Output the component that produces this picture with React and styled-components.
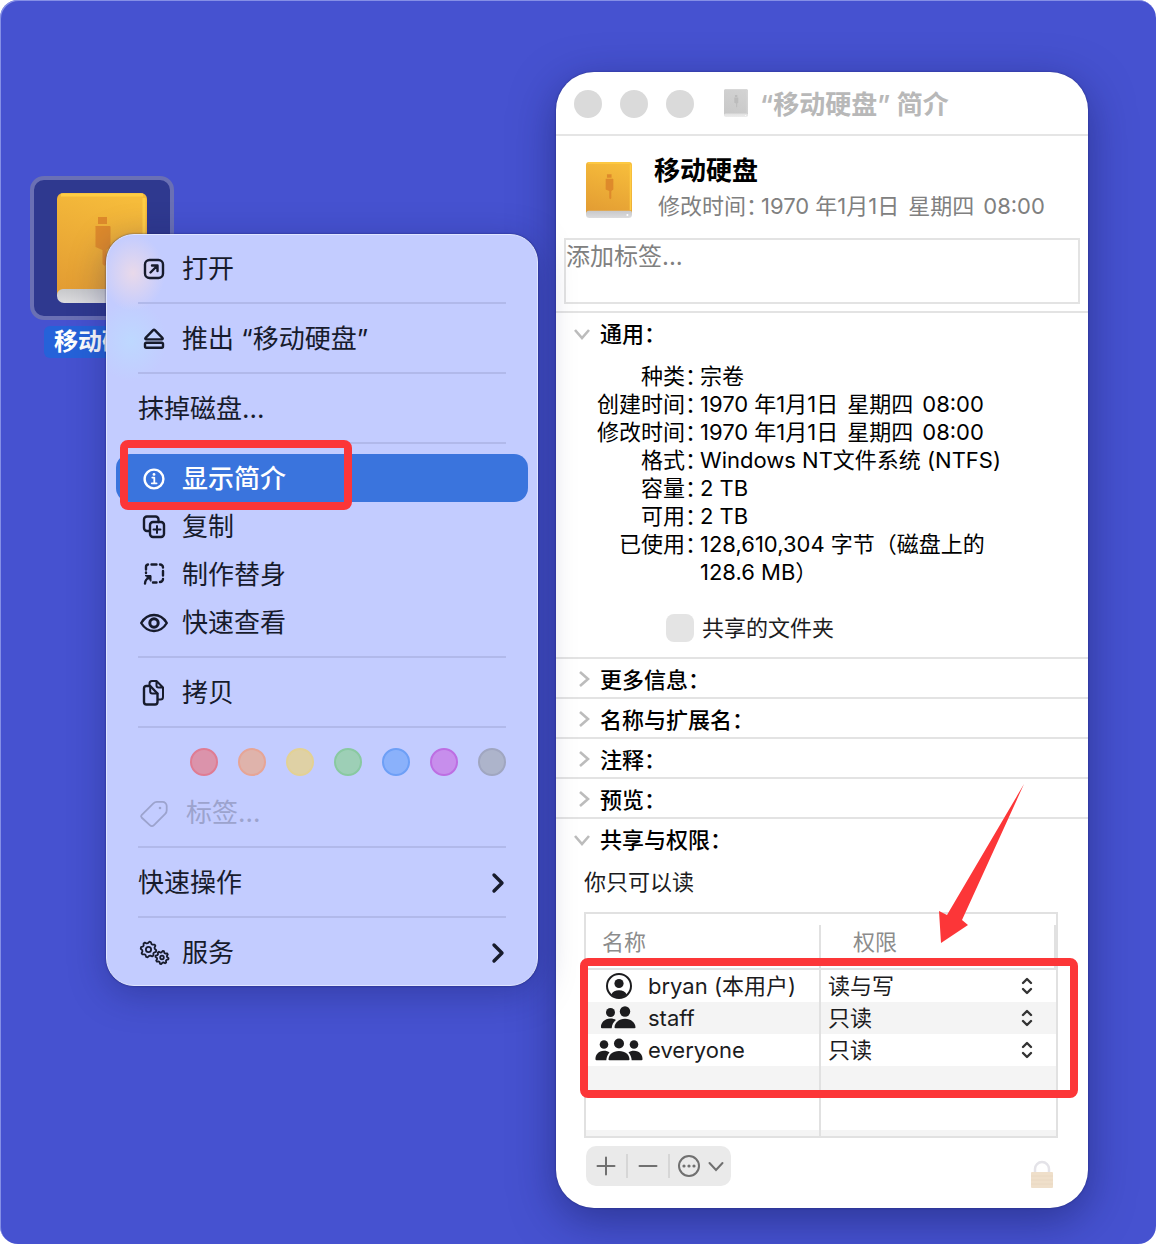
import { useId, useState } from "react";
import styled, { createGlobalStyle, css } from "styled-components";

const DATE = ["1970 年1月1日", "星期四", "08:00"];

const GENERAL = [
  ["种类：", "宗卷"],
  ["创建时间：", DATE],
  ["修改时间：", DATE],
  ["格式：", "Windows NT文件系统 (NTFS)"],
  ["容量：", "2 TB"],
  ["可用：", "2 TB"],
  ["已使用：", "128,610,304 字节（磁盘上的 128.6 MB）"],
];

const CLOSED_SECTIONS = ["更多信息：", "名称与扩展名：", "注释：", "预览："];

const USERS = [
  { name: "bryan (本用户)", icon: "person", access: "读与写" },
  { name: "staff", icon: "pair", access: "只读" },
  { name: "everyone", icon: "group", access: "只读" },
];

const TAGS = [
  { name: "红色", fill: "#db93ab", ring: "#df7c93" },
  { name: "橙色", fill: "#dfb3ab", ring: "#e6a596" },
  { name: "黄色", fill: "#dfd1a5", ring: "#e3d194" },
  { name: "绿色", fill: "#9dcfb6", ring: "#89c9a1" },
  { name: "蓝色", fill: "#8ab1fb", ring: "#6d9ff6" },
  { name: "紫色", fill: "#c78eec", ring: "#bd6ee2" },
  { name: "灰色", fill: "#adb4cb", ring: "#a0a6c0" },
];

function gear(cx, cy, r) {
  const points = [];
  for (let i = 0; i < 32; i++) {
    const angle = (i / 32) * Math.PI * 2 + 0.1;
    const radius = i % 4 < 2 ? r : r - 1.5;
    points.push(
      `${(cx + Math.cos(angle) * radius).toFixed(2)} ${(cy + Math.sin(angle) * radius).toFixed(2)}`
    );
  }
  return `M${points.join("L")}Z`;
}

const menuIcons = {
  open: (
    <>
      <rect x="7" y="7" width="18" height="18" rx="4.5" />
      <path d="M12.5 19.5l7-7M14 12.5h5.5V18" />
    </>
  ),
  eject: (
    <>
      <path d="M14.9 7.4L7.6 14.8c-.7.7-.3 1.6.7 1.6h15.4c1 0 1.4-.9.7-1.6l-7.3-7.4c-.7-.7-1.5-.7-2.2 0z" />
      <rect x="7" y="19.7" width="18" height="5" rx="1.4" />
    </>
  ),
  info: (
    <>
      <circle cx="16" cy="16" r="9.4" />
      <path d="M14.3 14.6h2v5.6M13.8 20.3h4.8" strokeWidth="1.8" />
      <circle cx="16" cy="11.4" r="1.4" fill="currentColor" stroke="none" />
    </>
  ),
  duplicate: (
    <>
      <path d="M11.5 20H9a3 3 0 0 1-3-3V8.5a3 3 0 0 1 3-3h8.5a3 3 0 0 1 3 3V11" />
      <rect x="12" y="11" width="14" height="15" rx="3" />
      <path d="M19 15v7M15.500 18.500h7" strokeWidth="2" />
    </>
  ),
  alias: (
    <>
      <path d="M8 10.500V8a2.500 2.500 0 0 1 2-2.500M13.500 5.500h5M22 5.500a3 3 0 0 1 3 3M25 12v4.500M25 20a3 3 0 0 1-3 3M18.500 23.500H15M8 13.500v.5" />
      <path d="M7 24.500c0-3 1.500-5 5-6.500" />
      <path d="M7.500 16.500h5.500v5.500z" fill="currentColor" strokeWidth="1" />
    </>
  ),
  eye: (
    <>
      <path d="M3.200 16c3-5 7.500-8 12.800-8s9.800 3 12.800 8c-3 5-7.500 8-12.800 8s-9.800-3-12.800-8z" />
      <circle cx="16" cy="16" r="4.200" strokeWidth="3" />
    </>
  ),
  copy: (
    <>
      <path d="M8.200 9h4l7.300 7.500V25a2.500 2.500 0 0 1-2.500 2.500H8.500A2.500 2.500 0 0 1 6 25V11.200A2.200 2.200 0 0 1 8.200 9z" />
      <path
        d="M12.200 9v5.500a2 2 0 0 0 2 2h5.300M11.500 8.500V6.500a2.500 2.500 0 0 1 2.500-2.500h4.500l6.500 6.500V20a2.500 2.500 0 0 1-2.500 2.500H20M18.500 4v4.500a2 2 0 0 0 2 2H25"
        strokeWidth="2"
      />
    </>
  ),
  tag: (
    <>
      <path
        d="M3.600 18.200L15.400 6.300A5 5 0 0 1 19 4.800h5.500A4.200 4.200 0 0 1 28.700 9v4.200a5 5 0 0 1-1.500 3.600L16 28.100a3 3 0 0 1-4.200 0l-8.200-7.600a1.700 1.700 0 0 1 0-2.300z"
        strokeWidth="1.8"
      />
      <circle cx="22" cy="11" r="1.3" fill="currentColor" stroke="none" />
    </>
  ),
  gears: (
    <g strokeWidth="1.8">
      <path d={gear(10.5, 12.5, 7.8)} />
      <circle cx="10.5" cy="12.5" r="2.6" />
      <path d={gear(24, 20.5, 6.6)} />
      <circle cx="24" cy="20.5" r="1.8" />
    </g>
  ),
};

const userIcons = {
  person: (
    <>
      <circle cx="25" cy="16" r="12" fill="none" stroke="currentColor" strokeWidth="2" />
      <circle cx="25" cy="13.5" r="4.6" />
      <path d="M17.300 24.600c1.500-3 4-4.300 7.700-4.300s6.200 1.300 7.700 4.300c-2 2-4.600 3-7.700 3s-5.700-1-7.700-3z" />
    </>
  ),
  pair: (
    <>
      <circle cx="16.5" cy="10.5" r="4.5" />
      <circle cx="31" cy="9.5" r="5.2" />
      <path d="M7 25.500c-.5-4.500 3.500-9 9.500-9 2.200 0 4 .5 5.400 1.500-2.500 2-4 4.700-4.200 8.300H8c-.6 0-1-.3-1-.8z" />
      <path d="M20.500 25.500c0-4.700 4.300-8.800 10.500-8.800s10.500 4.100 10.500 8.800c0 .5-.4.800-1 .8h-19c-.6 0-1-.3-1-.8z" />
    </>
  ),
  group: (
    <>
      <circle cx="10" cy="10.5" r="4.3" />
      <circle cx="25" cy="9.5" r="5" />
      <circle cx="40" cy="10.5" r="4.3" />
      <path d="M1.500 25.500c-.4-4.500 3-8.800 8.500-8.800 2.300 0 4.200.6 5.500 1.800-1.800 2-3 4.500-3.200 7.800H2.500c-.6 0-1-.3-1-.8z" />
      <path d="M48.500 25.500c.4-4.500-3-8.800-8.500-8.800-2.300 0-4.200.6-5.500 1.800 1.800 2 3 4.500 3.200 7.800h9.800c.6 0 1-.3 1-.8z" />
      <path d="M14.500 25.500c0-4.700 4-8.600 10.500-8.600s10.500 3.900 10.500 8.600c0 .5-.4.800-1 .8h-19c-.6 0-1-.3-1-.8z" />
    </>
  ),
};

function DriveIcon({ grey, ...props }) {
  const id = useId();
  return (
    <svg viewBox="0 0 90 110" preserveAspectRatio="none" aria-hidden="true" {...props}>
      <defs>
        <linearGradient id={`${id}b`} x1="0.6" y1="0" x2="0.3" y2="1">
          <stop offset="0" stopColor={grey ? "#d2d2d2" : "#f6bc3b"} />
          <stop offset="1" stopColor={grey ? "#c8c8c8" : "#e39d33"} />
        </linearGradient>
        <linearGradient id={`${id}s`} x1="0" y1="0" x2="0" y2="1">
          <stop offset="0" stopColor={grey ? "#d8d8d8" : "#b9babd"} />
          <stop offset="1" stopColor={grey ? "#ececec" : "#dcdcde"} />
        </linearGradient>
      </defs>
      <rect x="0" y="86" width="90" height="24" rx="7" fill={`url(#${id}s)`} />
      <path
        d="M6 0h78a6 6 0 0 1 6 6v94a4 4 0 0 0-4-4H6a6 6 0 0 0-6 6V6a6 6 0 0 1 6-6z"
        fill={`url(#${id}b)`}
      />
      <path
        d="M87 5v90M4 2h82"
        fill="none"
        stroke={grey ? "#dadada" : "#ffcd45"}
        strokeWidth="3"
      />
      <path
        d="M41 24h9v7h-9zM38.500 33h14a1 1 0 0 1 1 1v20l-4 3v14l-2 2-2-2V57l-7-3V34a1 1 0 0 1 0-1z"
        fill={grey ? "#bcbcbc" : "#de8a2b"}
      />
      <circle cx="81" cy="104" r="2" fill="#fff" />
    </svg>
  );
}

function DateText({ parts }) {
  return (
    <DateParts>
      {parts.map((part) => (
        <span key={part}>{part}</span>
      ))}
    </DateParts>
  );
}

function MenuItem({ icon, active, disabled, submenu, children }) {
  return (
    <Item type="button" role="menuitem" $active={active} disabled={disabled}>
      {icon && (
        <MenuIcon viewBox="0 0 32 32" aria-hidden="true">
          {menuIcons[icon]}
        </MenuIcon>
      )}
      <span>{children}</span>
      {submenu && (
        <SubmenuArrow viewBox="0 0 16 24" aria-hidden="true">
          <path d="M4 4l8 8-8 8" />
        </SubmenuArrow>
      )}
      {active && <ItemFrame />}
    </Item>
  );
}

function ContextMenu() {
  return (
    <Menu role="menu" aria-label="移动硬盘">
      <MenuItem icon="open">打开</MenuItem>
      <Separator />
      <MenuItem icon="eject">推出 “移动硬盘”</MenuItem>
      <Separator />
      <MenuItem>抹掉磁盘...</MenuItem>
      <Separator />
      <MenuItem icon="info" active>
        显示简介
      </MenuItem>
      <MenuItem icon="duplicate">复制</MenuItem>
      <MenuItem icon="alias">制作替身</MenuItem>
      <MenuItem icon="eye">快速查看</MenuItem>
      <Separator />
      <MenuItem icon="copy">拷贝</MenuItem>
      <Separator />
      <TagRow>
        {TAGS.map((tag) => (
          <TagDot
            key={tag.name}
            type="button"
            aria-label={tag.name}
            $fill={tag.fill}
            $ring={tag.ring}
          />
        ))}
      </TagRow>
      <MenuItem icon="tag" disabled>
        标签...
      </MenuItem>
      <Separator />
      <MenuItem submenu>快速操作</MenuItem>
      <Separator />
      <MenuItem icon="gears" submenu>
        服务
      </MenuItem>
    </Menu>
  );
}

function SectionHeader({ open, children }) {
  return (
    <SectionButton type="button" aria-expanded={!!open}>
      <Disclosure viewBox="0 0 20 20" aria-hidden="true">
        <path d={open ? "M3 6l7 8 7-8" : "M8 2l8 7-8 7"} />
      </Disclosure>
      {children}
    </SectionButton>
  );
}

function PermissionRow({ user }) {
  const [access, setAccess] = useState(user.access);
  return (
    <tr>
      <NameCell>
        <UserName>
          <UserIcon viewBox="0 0 50 32" aria-hidden="true">
            {userIcons[user.icon]}
          </UserIcon>
          {user.name}
        </UserName>
      </NameCell>
      <Cell>
        <SelectWrap>
          <Select
            aria-label={`${user.name} 权限`}
            value={access}
            onChange={(e) => setAccess(e.target.value)}
          >
            <option>读与写</option>
            <option>只读</option>
          </Select>
          <Stepper viewBox="0 0 12 18" aria-hidden="true">
            <path d="M2 6l4-4 4 4M2 12l4 4 4-4" />
          </Stepper>
        </SelectWrap>
      </Cell>
    </tr>
  );
}

function InfoWindow() {
  const [shared, setShared] = useState(false);
  return (
    <Window>
      <TitleBar>
        <Light type="button" aria-label="关闭" />
        <Light type="button" aria-label="最小化" />
        <Light type="button" aria-label="缩放" />
        <TitleIcon grey />
        <Title>“移动硬盘” 简介</Title>
      </TitleBar>
      <Summary>
        <SummaryIcon />
        <div>
          <Name>移动硬盘</Name>
          <Modified>
            <Label>修改时间：</Label>
            <DateText parts={DATE} />
          </Modified>
        </div>
      </Summary>
      <TagInput aria-label="标签" placeholder="添加标签..." />

      <Section>
        <SectionHeader open>通用：</SectionHeader>
        <Facts>
          {GENERAL.map(([label, value]) => (
            <Fact key={label}>
              <Label as="dt">{label}</Label>
              <dd>{Array.isArray(value) ? <DateText parts={value} /> : value}</dd>
            </Fact>
          ))}
        </Facts>
        <SharedLabel>
          <Checkbox
            type="checkbox"
            checked={shared}
            onChange={(e) => setShared(e.target.checked)}
          />
          共享的文件夹
        </SharedLabel>
      </Section>
      {CLOSED_SECTIONS.map((title) => (
        <Section key={title}>
          <SectionHeader>{title}</SectionHeader>
        </Section>
      ))}
      <Section>
        <SectionHeader open>共享与权限：</SectionHeader>
        <Sharing>
          <Note>你只可以读</Note>
          <TableWrap>
            <Table>
              <thead>
                <tr>
                  <HeadCell>名称</HeadCell>
                  <HeadCell $wide>权限</HeadCell>
                </tr>
              </thead>
              <tbody>
                {USERS.map((user) => (
                  <PermissionRow key={user.name} user={user} />
                ))}
                <tr>
                  <NameCell />
                  <Cell />
                </tr>
                <tr>
                  <NameCell />
                  <Cell />
                </tr>
                <tr>
                  <NameCell $short />
                  <Cell $short />
                </tr>
              </tbody>
            </Table>
            <TableFrame />
            <Arrow viewBox="0 0 90 166" aria-hidden="true">
              <path d="M88 3L26 139l6 5-27 18-2-32 8 4z" />
            </Arrow>
          </TableWrap>
          <Footer>
            <Toolbar>
              <ToolButton type="button" aria-label="添加">
                <ToolIcon viewBox="0 0 24 24" $width={24}>
                  <path d="M12 3.500v17M3.500 12h17" />
                </ToolIcon>
              </ToolButton>
              <Divider />
              <ToolButton type="button" aria-label="移除">
                <ToolIcon viewBox="0 0 24 24" $width={24}>
                  <path d="M3.500 12h17" />
                </ToolIcon>
              </ToolButton>
              <Divider />
              <ToolButton type="button" aria-label="更多操作" $wide>
                <ToolIcon viewBox="0 0 50 24" $width={50}>
                  <circle cx="13" cy="12" r="10" />
                  <path d="M33.500 9l6.500 7 6.500-7" />
                  <g fill="currentColor" stroke="none">
                    <circle cx="8" cy="12" r="1.6" />
                    <circle cx="13" cy="12" r="1.6" />
                    <circle cx="18" cy="12" r="1.6" />
                  </g>
                </ToolIcon>
              </ToolButton>
            </Toolbar>
            <LockButton type="button" aria-label="解锁">
              <svg width="24" height="30" viewBox="0 0 24 30">
                <path d="M5 14V9a7 7 0 0 1 14 0v5" fill="none" stroke="#e4e3e8" strokeWidth="2.5" />
                <rect x="1" y="12" width="22" height="16" rx="1" fill="#efdfca" />
                <path d="M1 16h22M1 20h22M1 24h22" stroke="#e9d8c2" />
              </svg>
            </LockButton>
          </Footer>
        </Sharing>
      </Section>
    </Window>
  );
}

export default function App() {
  return (
    <>
      <GlobalStyle />
      <Desktop>
        <DesktopItem>
          <IconFrame>
            <DesktopIcon />
          </IconFrame>
          <IconName>移动硬盘</IconName>
          <ContextMenu />
        </DesktopItem>
        <InfoWindow />
      </Desktop>
    </>
  );
}

//Styles
const GlobalStyle = createGlobalStyle`
  *, *::before, *::after {
    box-sizing: border-box;
  }

  body {
    margin: 0;
    background: #fff;
    color: #1c1c1e;
    font-family: Inter, "Noto Sans CJK SC", sans-serif;
    font-size: 22px;
    line-height: 28px;
  }

  button, input, select, textarea {
    margin: 0;
    padding: 0;
    border: 0;
    background: none;
    color: inherit;
    font: inherit;
  }

  svg {
    display: block;
    flex-shrink: 0;
  }
`;

const Desktop = styled.main`
  display: flex;
  align-items: flex-start;
  justify-content: space-between;
  min-height: 100vh;
  padding: 72px 68px 36px 30px;
  border-radius: 18px;
  background: #4652d0;
  box-shadow: inset 1px 1px 0 rgba(160, 170, 240, 0.7);
`;

const DesktopItem = styled.div`
  position: relative;
  display: flex;
  flex-direction: column;
  align-items: center;
  gap: 6px;
  margin-top: 104px;
`;

const IconFrame = styled.div`
  display: grid;
  place-items: center;
  width: 144px;
  height: 144px;
  border: 4px solid #6a70b4;
  border-radius: 14px;
  background: #2f398f;
`;

const DesktopIcon = styled(DriveIcon)`
  width: 90px;
  height: 110px;
`;

const IconName = styled.span`
  padding: 0 10px;
  border-radius: 6px;
  background: #2562d9;
  color: #fff;
  font-size: 24px;
  font-weight: 600;
  line-height: 32px;
`;

const Menu = styled.div`
  position: absolute;
  top: 58px;
  left: 76px;
  display: flex;
  flex-direction: column;
  width: 432px;
  padding: 9px;
  border: 1px solid #dfe5ff;
  border-radius: 28px;
  background: radial-gradient(ellipse 32px 38px at 26px 38px, #e9d9ea, rgba(233, 217, 234, 0)),
    radial-gradient(ellipse 36px 40px at 24px 106px, #bed8ff, rgba(190, 216, 255, 0)), #c3ccff;
  box-shadow: 0 0 2px rgba(20, 25, 90, 0.7), 0 8px 36px rgba(20, 25, 90, 0.35);
`;

const Item = styled.button`
  position: relative;
  display: flex;
  align-items: center;
  gap: 12px;
  height: 48px;
  padding: 2px 22px 0;
  border-radius: 14px;
  color: #171b2c;
  font-size: 26px;
  line-height: 36px;
  text-align: left;

  ${({ $active }) =>
    $active &&
    css`
      background: #3a74dd;
      color: #fff;
      font-weight: 500;
    `}

  &:disabled {
    gap: 16px;
    color: #9ca3cd;
  }
`;

const ItemFrame = styled.span`
  position: absolute;
  top: -14px;
  left: 4px;
  width: 232px;
  height: 70px;
  border: 8px solid #fc3638;
  border-radius: 8px;
  pointer-events: none;
`;

const MenuIcon = styled.svg`
  width: 32px;
  height: 32px;
  fill: none;
  stroke: currentColor;
  stroke-width: 2.4;
  stroke-linecap: round;
  stroke-linejoin: round;
`;

const SubmenuArrow = styled.svg`
  width: 16px;
  height: 24px;
  margin-left: auto;
  fill: none;
  stroke: currentColor;
  stroke-width: 3.4;
  stroke-linecap: round;
  stroke-linejoin: round;
`;

const Separator = styled.hr`
  width: auto;
  height: 2px;
  margin: 10px 22px;
  border: 0;
  background: #b1b9ea;
`;

const TagRow = styled.div`
  display: flex;
  align-items: center;
  justify-content: space-between;
  height: 50px;
  padding: 0 22px 2px 74px;
`;

const TagDot = styled.button`
  width: 28px;
  height: 28px;
  border: 2px solid ${({ $ring }) => $ring};
  border-radius: 50%;
  background: ${({ $fill }) => $fill};
`;

const Window = styled.section`
  flex: 0 1 532px;
  min-width: 0;
  overflow: hidden;
  border-radius: 38px;
  background: #fff;
  box-shadow: 0 0 2px rgba(20, 25, 90, 0.6), 0 12px 44px rgba(20, 25, 90, 0.5);
`;

const TitleBar = styled.header`
  display: flex;
  align-items: center;
  gap: 18px;
  height: 64px;
  padding: 2px 18px 0;
  border-bottom: 2px solid #e5e5e5;
`;

const Light = styled.button`
  width: 28px;
  height: 28px;
  border-radius: 50%;
  background: #dadada;
`;

const TitleIcon = styled(DriveIcon)`
  width: 24px;
  height: 28px;
  margin: 0 -6px 2px 12px;
`;

const Title = styled.h1`
  margin: 0;
  padding-top: 2px;
  color: #b8b8b8;
  font-size: 26px;
  font-weight: 600;
  line-height: 36px;
`;

const Summary = styled.div`
  display: flex;
  align-items: center;
  gap: 22px;
  padding: 17px 30px 15px;
`;

const SummaryIcon = styled(DriveIcon)`
  width: 46px;
  height: 56px;
  margin-top: 4px;
`;

const Name = styled.h2`
  margin: 0;
  color: #000;
  font-size: 26px;
  font-weight: 700;
  line-height: 36px;
`;

const Modified = styled.p`
  display: flex;
  margin: 0 0 0 4px;
  color: #808080;
  line-height: 34px;
`;

// half-width form of the colon, so the value follows it closely
const Label = styled.span`
  padding-right: 4px;
  font-feature-settings: "halt";
  text-align: right;
`;

const DateParts = styled.span`
  display: inline-flex;
  gap: 9px;
`;

const TagInput = styled.textarea`
  display: block;
  width: calc(100% - 16px);
  height: 66px;
  margin: 0 8px 7px;
  border: 2px solid #e3e3e3;
  font-size: 24px;
  line-height: 34px;
  resize: none;

  &::placeholder {
    color: #808080;
    opacity: 1;
  }
`;

const Section = styled.section`
  border-top: 2px solid #e3e3e3;
`;

const SectionButton = styled.button`
  display: flex;
  align-items: center;
  gap: 8px;
  width: 100%;
  height: 38px;
  padding: 4px 16px 0;
  color: #000;
  font-weight: 500;
  text-align: left;
`;

const Disclosure = styled.svg`
  width: 20px;
  height: 20px;
  fill: none;
  stroke: #bcbcbc;
  stroke-width: 2.6;
`;

const Facts = styled.dl`
  margin: 11px 68px 28px 0;
  color: #000;
`;

const Fact = styled.div`
  display: grid;
  grid-template-columns: 144px 1fr;

  dd {
    margin: 0;
  }
`;

const SharedLabel = styled.label`
  display: flex;
  align-items: center;
  gap: 8px;
  width: fit-content;
  margin: 0 0 15px 110px;
`;

const Checkbox = styled.input`
  width: 28px;
  height: 28px;
  appearance: none;
  border-radius: 8px;
  background: #e4e4e4;

  &:checked {
    background: #3a74dd;
  }
`;

const Sharing = styled.div`
  padding: 11px 30px 22px 28px;
`;

const Note = styled.p`
  margin: 0 0 16px;
`;

const TableWrap = styled.div`
  position: relative;
  border: 2px solid #e1e1e1;
`;

const Table = styled.table`
  width: 100%;
  border-collapse: separate;
  border-spacing: 0;
  table-layout: fixed;

  tbody tr:nth-child(even) {
    background: #f4f4f4;
  }
`;

const HeadCell = styled.th`
  height: 56px;
  padding: 2px 0 0 ${({ $wide }) => ($wide ? 32 : 16)}px;
  border-bottom: 2px solid #e1e1e1;
  background: linear-gradient(#e1e1e1, #e1e1e1) right bottom / 2px 43px no-repeat;
  color: #8c8c8c;
  font-weight: 400;
  text-align: left;
`;

const Cell = styled.td`
  height: ${({ $short }) => ($short ? 6 : 32)}px;
  padding: 0 23px 0 7px;
`;

const NameCell = styled(Cell)`
  padding: 0 0 0 8px;
  border-right: 2px solid #e1e1e1;
`;

const UserName = styled.div`
  display: flex;
  align-items: center;
  gap: 4px;
  white-space: nowrap;
`;

const UserIcon = styled.svg`
  width: 50px;
  height: 32px;
  fill: currentColor;
`;

const SelectWrap = styled.div`
  display: flex;
  align-items: center;
`;

const Select = styled.select`
  flex: 1;
  min-width: 0;
  height: 32px;
  appearance: none;
`;

const Stepper = styled.svg`
  width: 12px;
  height: 18px;
  fill: none;
  stroke: #333;
  stroke-width: 2.4;
  stroke-linecap: round;
  stroke-linejoin: round;
  pointer-events: none;
`;

const TableFrame = styled.span`
  position: absolute;
  top: 44px;
  left: -6px;
  right: -22px;
  height: 140px;
  border: 8px solid #fc3638;
  border-radius: 8px;
  pointer-events: none;
`;

const Arrow = styled.svg`
  position: absolute;
  top: -133px;
  right: 30px;
  width: 90px;
  height: 166px;
  fill: #fc3638;
  pointer-events: none;
`;

const Footer = styled.div`
  display: flex;
  align-items: center;
  justify-content: space-between;
  margin-top: 8px;
  padding: 0 4px 0 2px;
`;

const Toolbar = styled.div`
  display: flex;
  align-items: center;
  height: 40px;
  border-radius: 10px;
  background: #eaeaea;
`;

const ToolButton = styled.button`
  display: grid;
  place-items: center;
  width: ${({ $wide }) => ($wide ? 61 : 40)}px;
  height: 40px;
  color: #707070;
`;

const ToolIcon = styled.svg`
  width: ${({ $width }) => $width}px;
  height: 24px;
  fill: none;
  stroke: currentColor;
  stroke-width: 2;
  stroke-linecap: round;
`;

const Divider = styled.span`
  width: 2px;
  height: 24px;
  background: #d6d6d6;
`;

const LockButton = styled.button`
  margin-top: 14px;
  height: 26px;
`;
